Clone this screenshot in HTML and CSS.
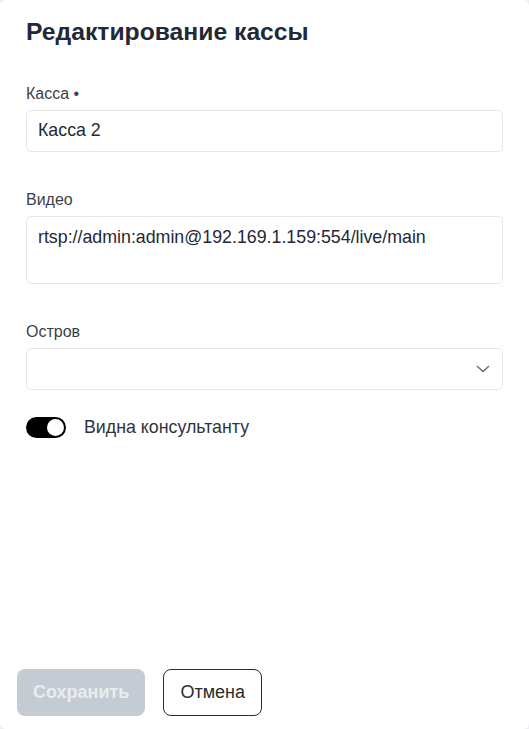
FILE: index.html
```html
<!DOCTYPE html>
<html lang="ru">
<head>
    <meta charset="UTF-8">
    <meta name="viewport" content="width=device-width, initial-scale=1.0">
    <title>Редактирование кассы</title>
    <link rel="stylesheet" href="styles.css">
</head>
<body>
    <div class="modal">
        <div class="modal-body">
            <h1>Редактирование кассы</h1>
            <form id="cashboxForm">
                <div class="form-group">
                    <label for="cashbox">Касса •</label>
                    <input type="text" id="cashbox" name="cashbox" value="Касса 2">
                </div>
                <div class="form-group">
                    <label for="video">Видео</label>
                    <textarea id="video" name="video" rows="2">rtsp://admin:admin@192.169.1.159:554/live/main</textarea>
                </div>
                <div class="form-group">
                    <label for="island">Остров</label>
                    <div class="select-wrap">
                        <select id="island" name="island">
                            <option value=""></option>
                        </select>
                        <svg class="chevron" width="16" height="16" viewBox="0 0 16 16" fill="none">
                            <path d="M2.5 5.5 L8 10.5 L13.5 5.5" stroke="#6b7280" stroke-width="1.6" stroke-linecap="round" stroke-linejoin="round"/>
                        </svg>
                    </div>
                </div>
                <label class="switch-row">
                    <span class="switch"><span class="knob"></span></span>
                    <span class="switch-label">Видна консультанту</span>
                </label>
            </form>
        </div>
        <div class="modal-footer">
            <button type="submit" class="btn btn-primary" disabled>Сохранить</button>
            <button type="button" class="btn btn-outline">Отмена</button>
        </div>
    </div>
</body>
</html>
```

FILE: styles.css
```css
html, body {
    height: 100%;
}
body {
    margin: 0;
    font-family: "Liberation Sans", Arial, sans-serif;
    background-color: #eef0f3;
}
.modal {
    box-sizing: border-box;
    height: 100%;
    display: flex;
    flex-direction: column;
    background-color: #fff;
    border-radius: 6px;
}
.modal-body {
    padding: 18px 26px 0;
}
h1 {
    margin: 0 0 37px;
    font-size: 24.7px;
    line-height: 28.8px;
    font-weight: bold;
    color: #1f2937;
}
.form-group {
    margin-bottom: 38px;
}
.form-group:nth-child(3) {
    margin-bottom: 27px;
}
label {
    display: block;
    margin-bottom: 6px;
    font-size: 16px;
    line-height: 20px;
    color: #3b3f46;
}
input[type="text"], textarea, select {
    display: block;
    width: 100%;
    box-sizing: border-box;
    margin: 0;
    border: 1px solid #e3e7ec;
    border-radius: 5px;
    background: #fff;
    font-family: inherit;
    font-size: 17.8px;
    color: #1f2937;
    outline: none;
}
input[type="text"] {
    height: 42px;
    padding: 0 11px;
}
textarea {
    height: 68px;
    padding: 10px 11px;
    resize: none;
    line-height: normal;
}
.select-wrap {
    position: relative;
}
select {
    height: 42px;
    padding: 0 11px;
    appearance: none;
    -webkit-appearance: none;
}
.chevron {
    position: absolute;
    right: 12px;
    top: 13px;
    pointer-events: none;
}
.switch-row {
    display: flex;
    align-items: center;
    gap: 18px;
    margin: 0;
}
.switch {
    box-sizing: border-box;
    width: 40px;
    height: 21px;
    border-radius: 11px;
    background-color: #000;
    display: flex;
    align-items: center;
    justify-content: flex-end;
    padding: 0 2px;
}
.knob {
    width: 17px;
    height: 17px;
    border-radius: 50%;
    background-color: #fff;
}
.switch-label {
    font-size: 17.8px;
    color: #2d3440;
}
.modal-footer {
    margin-top: auto;
    display: flex;
    gap: 18px;
    padding: 0 17px 13px;
}
.btn {
    height: 47px;
    padding: 0 16px;
    border-radius: 8px;
    font-family: inherit;
    font-size: 18px;
    cursor: pointer;
}
.btn-primary {
    border: none;
    background-color: #c5cbd3;
    color: #e9ecf0;
    font-weight: bold;
}
.btn-outline {
    border: 1px solid #2b2b2b;
    background-color: #fff;
    color: #2b2b2b;
}
```
